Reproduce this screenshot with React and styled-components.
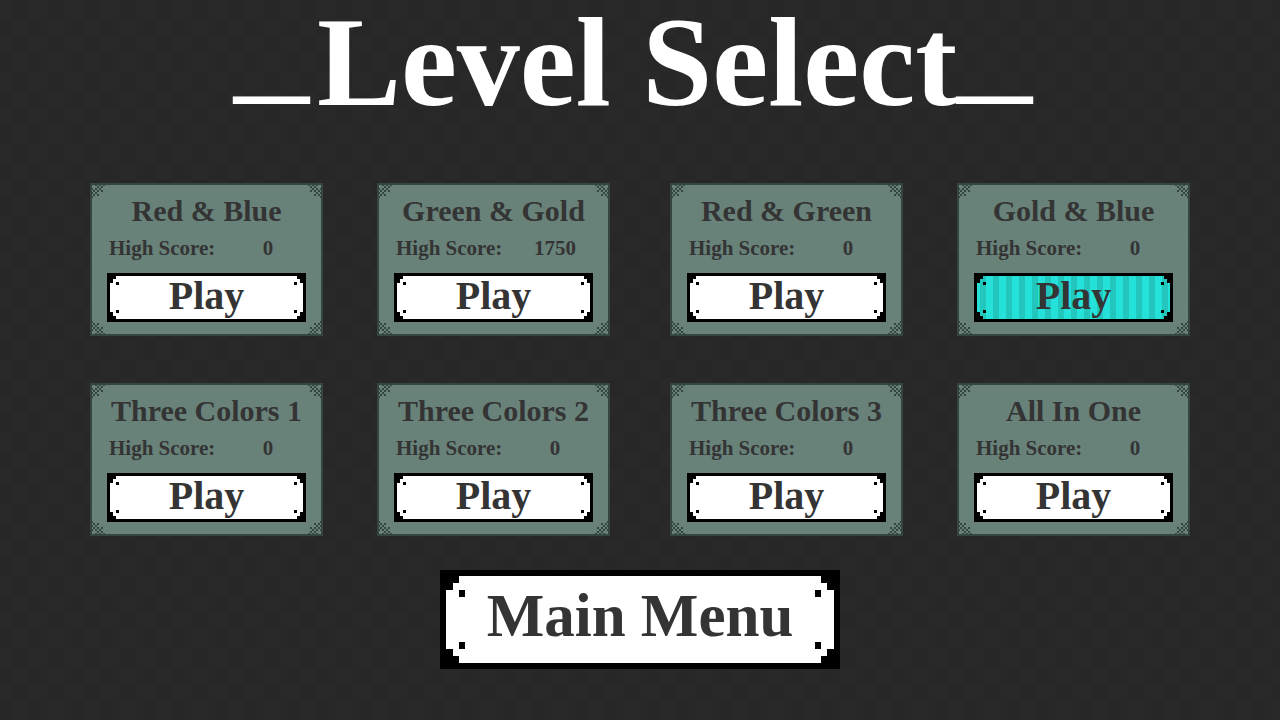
import React from "react";
import styled, { createGlobalStyle, css } from "styled-components";

const GlobalStyle = createGlobalStyle`
  * { box-sizing: border-box; }
  body {
    margin: 0;
    background: #282828 repeating-conic-gradient(#292929 0 25%, #272727 0 50%) 11px 0 / 36px 36px;
    font-family: "Liberation Serif", serif;
    font-weight: 700;
    color: #343434;
  }
`;

const Page = styled.main`
  min-height: 100vh;
  display: flex;
  flex-direction: column;
  align-items: center;
`;

const Title = styled.h1`
  margin: 0;
  padding: 20px 14px 0 0;
  height: 183px;
  font-size: 126px;
  line-height: 86px;
  font-weight: 700;
  color: #fff;
  white-space: nowrap;
`;

const Flourish = styled.span`
  font-size: 150px;
  font-weight: 400;
  line-height: 1px;
  vertical-align: 20px;

  &:first-child { margin-right: 8px; }
`;

const Levels = styled.section`
  width: 100%;
  padding: 0 90px;
  display: grid;
  grid-template-columns: 233fr 239fr 233fr 233fr;
  gap: 47px 54px;
`;

const Card = styled.article`
  position: relative;
  padding: 10px 15px 12px;
  display: flex;
  flex-direction: column;
  background: #68827a;
  border: 2px solid #34463f;

  &:nth-child(4n + 2) { margin-right: 6px; }
`;

const LevelName = styled.h2`
  margin: 0 -12px;
  font-size: 30px;
  line-height: 32px;
  font-weight: 700;
  text-align: center;
  white-space: nowrap;
`;

const Score = styled.p`
  margin: 0 0 4px;
  padding: 0 2px;
  display: flex;
  justify-content: space-between;
  font-size: 21px;
  line-height: 42px;
`;

const ScoreValue = styled.span`
  width: 72px;
  text-align: center;
`;

const CornerSvg = styled.svg`
  position: absolute;
  width: ${(p) => p.$size}px;
  height: ${(p) => p.$size}px;
  ${(p) => (p.$bottom ? "bottom" : "top")}: ${(p) => p.$inset}px;
  ${(p) => (p.$right ? "right" : "left")}: ${(p) => p.$inset}px;
  transform: scale(${(p) => (p.$right ? -1 : 1)}, ${(p) => (p.$bottom ? -1 : 1)});
  shape-rendering: crispEdges;
`;

const striped = css`
  background: repeating-linear-gradient(90deg, #24e2da 0 3px, #22c6bd 3px 9px, #24e2da 9px 13px);
`;

const PlateButton = styled.button`
  position: relative;
  margin: 0;
  padding: 0 0 ${(p) => (p.$large ? 8 : 4)}px;
  border: ${(p) => (p.$large ? 6 : 3)}px solid #000;
  width: ${(p) => (p.$large ? "400px" : "100%")};
  height: ${(p) => (p.$large ? 99 : 49)}px;
  background: #fff;
  color: #343434;
  font-family: inherit;
  font-weight: 700;
  font-size: ${(p) => (p.$large ? 61 : 40)}px;
  line-height: 1;
  cursor: pointer;
  ${(p) => p.$active && striped}
`;

const Footer = styled.footer`
  padding-top: 34px;
`;

const PLATE_LARGE = "M0 0H19V13H13V20H0ZM19 20H25V27H19Z";
const PLATE_SMALL = "M0 0H9V6H6V10H0ZM9 9H12V12H9Z";
const DITHER = [
  [2, 0], [4, 0], [6, 0],
  [3, 1], [5, 1],
  [0, 2], [2, 2], [4, 2],
  [1, 3], [3, 3], [5, 3],
  [0, 4], [2, 4],
  [1, 5], [3, 5],
  [0, 6],
]
  .map(([x, y]) => `M${x} ${y}h1v1h-1z`)
  .join("");

function Corners({ d, units, size, inset, color }) {
  return [0, 1, 2, 3].map((i) => (
    <CornerSvg
      key={i}
      aria-hidden="true"
      viewBox={`0 0 ${units} ${units}`}
      $size={size}
      $inset={inset}
      $right={i % 2 === 1}
      $bottom={i > 1}
    >
      <path d={d} fill={color} />
    </CornerSvg>
  ));
}

function Plate({ large, active, children }) {
  const size = large ? 27 : 13;
  return (
    <PlateButton type="button" $large={large} $active={active}>
      <Corners
        d={large ? PLATE_LARGE : PLATE_SMALL}
        units={size}
        size={size}
        inset={large ? -6 : -3}
        color="#000"
      />
      {children}
    </PlateButton>
  );
}

const levels = [
  ["Red & Blue", 0],
  ["Green & Gold", 1750],
  ["Red & Green", 0],
  ["Gold & Blue", 0],
  ["Three Colors 1", 0],
  ["Three Colors 2", 0],
  ["Three Colors 3", 0],
  ["All In One", 0],
];

export default function App() {
  return (
    <Page>
      <GlobalStyle />
      <Title>
        <Flourish>_</Flourish>Level Select<Flourish>_</Flourish>
      </Title>
      <Levels>
        {levels.map(([name, score]) => (
          <Card key={name}>
            <Corners d={DITHER} units={7} size={14} inset={-1} color="#34463f" />
            <LevelName>{name}</LevelName>
            <Score>
              <span>High Score:</span>
              <ScoreValue>{score}</ScoreValue>
            </Score>
            <Plate active={name === "Gold & Blue"}>Play</Plate>
          </Card>
        ))}
      </Levels>
      <Footer>
        <Plate large>Main Menu</Plate>
      </Footer>
    </Page>
  );
}
